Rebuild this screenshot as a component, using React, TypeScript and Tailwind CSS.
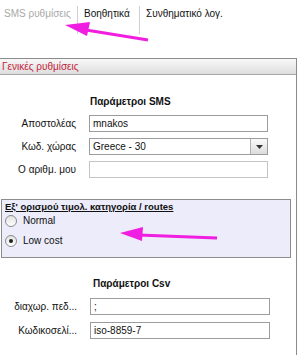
import React from "react";

function Radio({ checked }: { checked?: boolean }) {
  return (
    <span className="w-[12px] h-[12px] rounded-full border border-[#8a8a8a] bg-gradient-to-b from-[#e2e2e2] to-white flex items-center justify-center shrink-0">
      {checked && <span className="w-[4px] h-[4px] rounded-full bg-[#222]" />}
    </span>
  );
}

function Row({ label, children, lw = "w-[76px]" }: { label: string; children: React.ReactNode; lw?: string }) {
  return (
    <div className="flex items-center h-[17px]">
      <div className={`${lw} text-right text-[#111] whitespace-nowrap`}>{label}</div>
      <div className="ml-[13px] flex-1 flex">{children}</div>
    </div>
  );
}

export default function App() {
  return (
    <div className="w-[300px] h-[355px] bg-white overflow-hidden relative font-['Liberation_Sans',Arial,sans-serif] text-[10px] text-[#111]">
      <div className="h-[58px] flex items-start pt-[6px] whitespace-nowrap">
        <div className="w-[78px] h-[28px] border-r border-[#cfcfcf] pl-[4px] pt-[1px] text-[#a8a8a8] leading-[13px]">SMS ρυθμίσεις</div>
        <div className="w-[62px] h-[28px] border-r border-[#cfcfcf] pl-[6px] pt-[1px] leading-[13px]">Βοηθητικά</div>
        <div className="pl-[6px] pt-[1px] leading-[13px]">Συνθηματικό λογ.</div>
      </div>
      <div className="w-[297px] border-t border-r border-[#8c8c8c] h-[297px]">
        <div className="h-[16px] border-b border-[#a8a8a8] bg-gradient-to-b from-[#f8f8f8] to-[#dedede] pl-[2px] text-[#c41e3a] leading-[15px] whitespace-nowrap">
          Γενικές ρυθμίσεις
        </div>
        <div className="pl-[90px] mt-[20px] font-bold text-[10px] leading-[14px] h-[14px] whitespace-nowrap">Παράμετροι SMS</div>
        <div className="mt-[6px] flex flex-col gap-[6px] w-[268px]">
          <Row label="Αποστολέας">
            <div className="w-full h-[17px] border border-[#9c9c9c] px-[3px] leading-[15px]">mnakos</div>
          </Row>
          <Row label="Κωδ. χώρας">
            <div className="w-full h-[17px] border border-[#9c9c9c] flex">
              <div className="flex-1 px-[3px] leading-[15px]">Greece - 30</div>
              <div className="w-[17px] border-l border-[#b0b0b0] bg-gradient-to-b from-[#fafafa] to-[#dcdcdc] flex items-center justify-center">
                <svg width="7" height="4" viewBox="0 0 7 4"><path d="M0 0h7L3.5 4z" fill="#333" /></svg>
              </div>
            </div>
          </Row>
          <Row label="Ο αριθμ. μου">
            <div className="w-full h-[17px] border border-[#c4c4c4]" />
          </Row>
        </div>
        <div className="mt-[21px] ml-[1px] w-[290px] h-[59px] border border-[#8c8c8c] bg-[#ececfa] px-[3px]">
          <div className="font-bold text-[9.5px] underline leading-[12px] mt-[1px] whitespace-nowrap">Εξ' ορισμού τιμολ. κατηγορία / routes</div>
          <div className="flex items-center gap-[6px] h-[13px] mt-[1px]">
            <Radio />
            <span>Normal</span>
          </div>
          <div className="flex items-center gap-[6px] h-[13px] mt-[7px]">
            <Radio checked />
            <span>Low cost</span>
          </div>
        </div>
        <div className="pl-[93px] mt-[19px] font-bold text-[10px] leading-[14px] h-[14px] whitespace-nowrap">Παράμετροι Csv</div>
        <div className="mt-[7px] flex flex-col gap-[7px] w-[270px]">
          <Row label="διαχωρ. πεδ..." lw="w-[77px]">
            <div className="w-full h-[17px] border border-[#9c9c9c] px-[3px] leading-[15px]">;</div>
          </Row>
          <Row label="Κωδικοσελί..." lw="w-[77px]">
            <div className="w-full h-[17px] border border-[#9c9c9c] px-[3px] leading-[15px]">iso-8859-7</div>
          </Row>
        </div>
      </div>
      <svg className="absolute left-0 top-0 pointer-events-none" width="300" height="355">
        <line x1="148" y1="40" x2="86" y2="30" stroke="#f01ee0" strokeWidth="3" />
        <polygon points="65,25 90,22 87,36" fill="#f01ee0" />
        <line x1="217" y1="238" x2="138" y2="235" stroke="#f01ee0" strokeWidth="3" />
        <polygon points="120,233 143,227 142,241" fill="#f01ee0" />
      </svg>
    </div>
  );
}
